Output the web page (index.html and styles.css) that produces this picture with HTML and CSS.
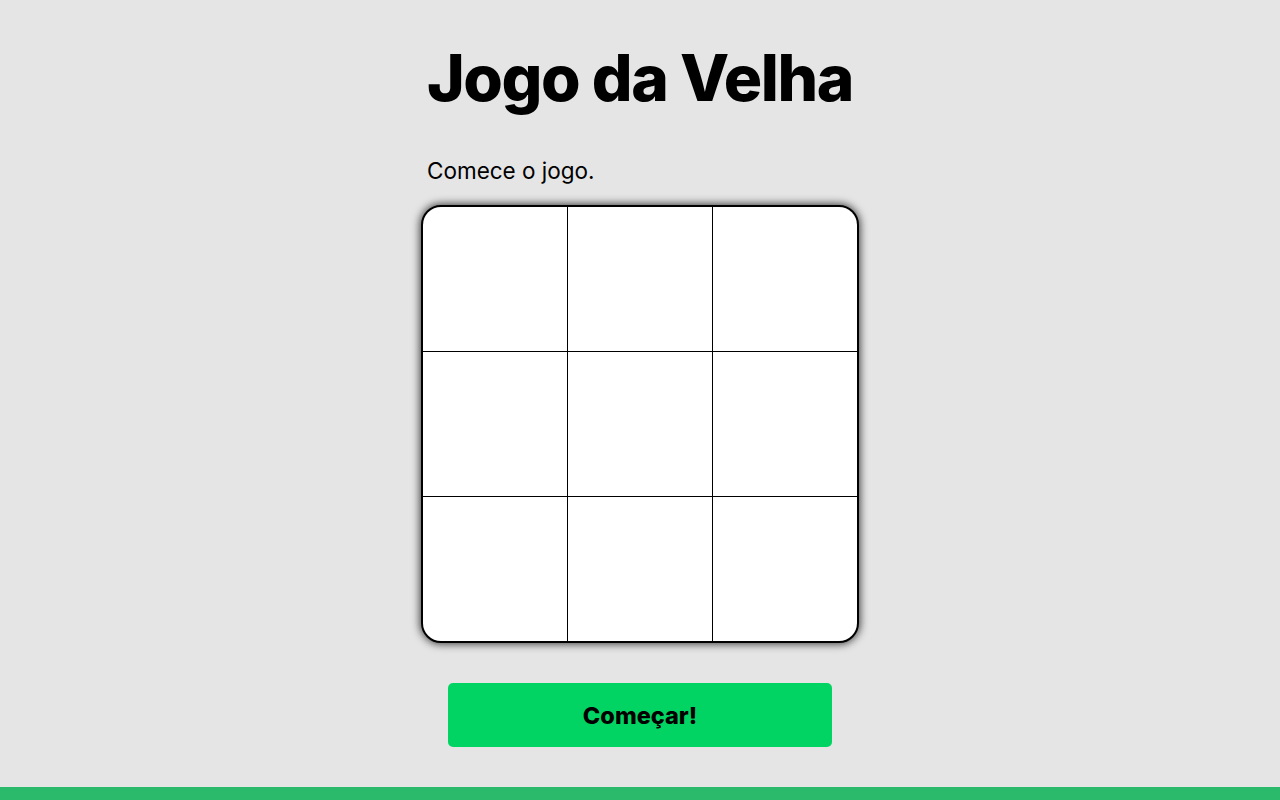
FILE: index.html
```html
<!DOCTYPE html>
<html lang="pt-BR">
<head>
<meta charset="utf-8">
<title>Jogo da Velha</title>
<link rel="stylesheet" href="styles.css">
</head>
<body>
<main class="game">
  <h1 class="title">Jogo da Velha</h1>
  <p class="status">Comece o jogo.</p>
  <div class="board">
    <div class="cell"></div><div class="cell"></div><div class="cell"></div>
    <div class="cell"></div><div class="cell"></div><div class="cell"></div>
    <div class="cell"></div><div class="cell"></div><div class="cell"></div>
  </div>
  <button class="start">Começar!</button>
</main>
<footer class="footer"></footer>
</body>
</html>
```

FILE: styles.css
```css
* { box-sizing: border-box; }
html, body { margin: 0; padding: 0; }
body {
  background: #e5e5e5;
  font-family: Inter, "Noto Sans", sans-serif;
  color: #000;
  min-height: 800px;
  display: flex;
  flex-direction: column;
}
.game {
  flex: 1;
  display: flex;
  flex-direction: column;
  align-items: center;
  padding-top: 38px;
}
.title {
  margin: 0;
  font-size: 64px;
  font-weight: 800;
  letter-spacing: -1.4px;
  line-height: 80px;
}
.status {
  width: 426px;
  margin: 39px 0 0;
  font-size: 22.5px;
  line-height: 28px;
}
.board {
  margin-top: 20px;
  width: 438px;
  height: 438px;
  border: 2px solid #000;
  border-radius: 20px;
  overflow: hidden;
  box-shadow: 0 0 8px 1px rgba(0,0,0,0.75);
  display: grid;
  grid-template-columns: repeat(3, 1fr);
  grid-template-rows: repeat(3, 1fr);
  gap: 1px;
  background-color: #000;
}
.cell { background: #fff; }
.start {
  margin-top: 40px;
  width: 384px;
  height: 64px;
  border: none;
  border-radius: 5px;
  background: #02d463;
  font-family: Inter, "Noto Sans", sans-serif;
  font-size: 23.5px;
  font-weight: 800;
  color: #000;
  cursor: pointer;
}
.footer {
  height: 13px;
  background: #2bb96b;
}
```
